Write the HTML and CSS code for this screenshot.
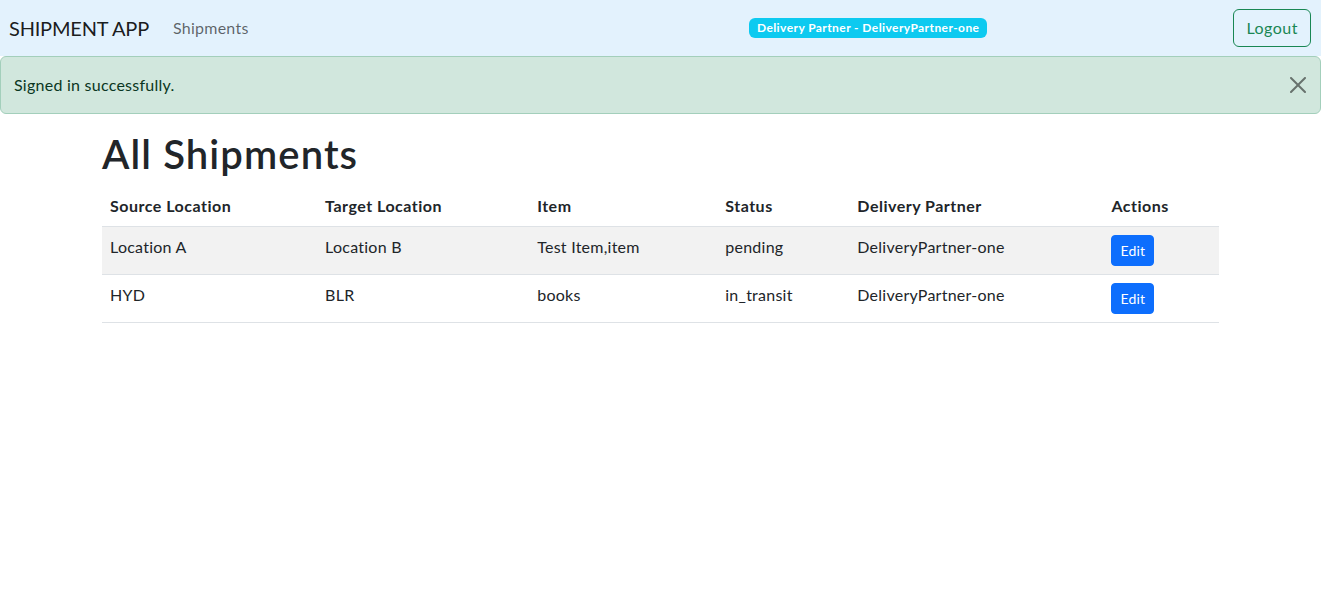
FILE: index.html
```html
<!DOCTYPE html>
<html lang="en">
<head>
<meta charset="utf-8">
<title>Shipment App</title>
<link rel="stylesheet" href="styles.css">
</head>
<body>
<nav class="navbar">
  <a class="brand" href="#">SHIPMENT APP</a>
  <a class="nav-link" href="#">Shipments</a>
  <span class="badge">Delivery Partner - DeliveryPartner-one</span>
  <button class="btn-logout" type="button">Logout</button>
</nav>
<div class="alert">
  <span>Signed in successfully.</span>
  <button class="btn-close" type="button" aria-label="Close">
    <svg viewBox="0 0 16 16" width="16" height="16"><path d="M.293.293a1 1 0 0 1 1.414 0L8 6.586 14.293.293a1 1 0 1 1 1.414 1.414L9.414 8l6.293 6.293a1 1 0 0 1-1.414 1.414L8 9.414l-6.293 6.293a1 1 0 0 1-1.414-1.414L6.586 8 .293 1.707a1 1 0 0 1 0-1.414z" fill="currentColor"/></svg>
  </button>
</div>
<main class="container">
  <h1 class="title">All Shipments</h1>
  <table class="table">
    <thead>
      <tr>
        <th class="c-src">Source Location</th>
        <th class="c-tgt">Target Location</th>
        <th class="c-item">Item</th>
        <th class="c-status">Status</th>
        <th class="c-partner">Delivery Partner</th>
        <th class="c-actions">Actions</th>
      </tr>
    </thead>
    <tbody>
      <tr class="striped">
        <td>Location A</td>
        <td>Location B</td>
        <td>Test Item,item</td>
        <td>pending</td>
        <td>DeliveryPartner-one</td>
        <td><button class="btn-edit" type="button">Edit</button></td>
      </tr>
      <tr>
        <td>HYD</td>
        <td>BLR</td>
        <td>books</td>
        <td>in_transit</td>
        <td>DeliveryPartner-one</td>
        <td><button class="btn-edit" type="button">Edit</button></td>
      </tr>
    </tbody>
  </table>
</main>
</body>
</html>
```
FILE: styles.css
```css
* { box-sizing: border-box; }
body {
  margin: 0;
  font-family: "Lato", "Noto Sans", sans-serif;
  font-size: 16px;
  line-height: 1.5;
  letter-spacing: 0.25px;
  color: #212529;
  background: #fff;
}
.navbar {
  display: flex;
  align-items: center;
  height: 56px;
  padding: 8px 10px 8px 9px;
  background: #e3f2fd;
}
.brand {
  font-size: 20px;
  line-height: 30px;
  padding: 5px 0;
  margin-right: 16px;
  letter-spacing: -0.2px;
  color: rgba(0,0,0,.9);
  text-decoration: none;
}
.nav-link {
  padding: 8px;
  color: rgba(0,0,0,.6);
  text-decoration: none;
}
.badge {
  margin-left: auto;
  margin-right: 246px;
  display: inline-block;
  padding: 4px 8px;
  font-size: 12px;
  font-weight: 700;
  line-height: 1;
  letter-spacing: 0.42px;
  color: #fff;
  background: #0dcaf0;
  border-radius: 6px;
}
.btn-logout {
  font-family: inherit;
  font-size: 16px;
  line-height: 24px;
  letter-spacing: 0.5px;
  padding: 6px 12px;
  color: #198754;
  background: transparent;
  border: 1px solid #198754;
  border-radius: 6px;
}
.alert {
  position: relative;
  display: flex;
  align-items: center;
  height: 58px;
  padding: 16px 48px 16px 13px;
  margin-bottom: 16px;
  color: #0a3622;
  background: #d1e7dd;
  border: 1px solid #a3cfbb;
  border-radius: 6px;
}
.btn-close {
  position: absolute;
  top: 0;
  right: 0;
  width: 45px;
  height: 56px;
  padding: 0;
  display: flex;
  align-items: center;
  justify-content: center;
  border: 0;
  background: transparent;
  color: #000;
  opacity: .5;
}
.container {
  width: 1140px;
  margin: 0 auto;
  padding: 0 12px 0 11.5px;
}
.title {
  margin: 0 0 8px;
  font-size: 40px;
  font-weight: 600;
  line-height: 48px;
  letter-spacing: 1.1px;
}
.table {
  width: 100%;
  border-collapse: collapse;
}
.table th, .table td {
  text-align: left;
  vertical-align: top;
  padding: 8px;
  border-bottom: 1px solid #dee2e6;
}
.table th { font-weight: 700; letter-spacing: 0.5px; }
.table tr.striped td { background: #f2f2f2; }
.c-src { width: 215px; }
.c-tgt { width: 212px; }
.c-item { width: 188px; }
.c-status { width: 132px; }
.c-partner { width: 254px; }
.c-actions { width: 115px; }
.btn-edit {
  font-family: inherit;
  font-size: 14px;
  line-height: 21px;
  letter-spacing: 0.2px;
  padding: 4px 8px;
  width: 43px;
  color: #fff;
  background: #0d6efd;
  border: 1px solid #0d6efd;
  border-radius: 4px;
}
```
